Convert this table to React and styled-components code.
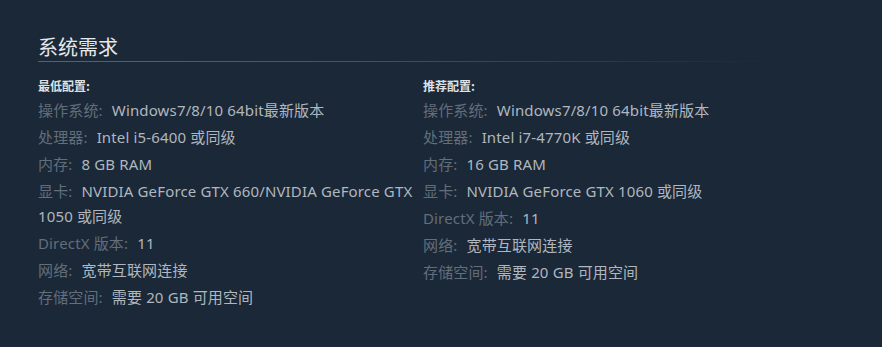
import React from 'react';
import styled, { createGlobalStyle } from 'styled-components';

const GlobalStyle = createGlobalStyle`
  html, body {
    margin: 0;
    padding: 0;
    background: #1b2838;
  }
  body {
    font-family: "Noto Sans", "Noto Sans CJK SC", sans-serif;
  }
`;

const Page = styled.div`
  width: 882px;
  height: 347px;
  background: #1b2838;
  padding: 34px 0 0 38px;
  box-sizing: border-box;
`;

const Title = styled.h2`
  margin: 0;
  width: 740px;
  font-family: "Noto Sans CJK SC", sans-serif;
  font-size: 20px;
  font-weight: 400;
  line-height: 26px;
  color: #e5e9ec;
  padding-bottom: 2px;

  &::after {
    content: '';
    display: block;
    height: 1px;
    margin-top: 1px;
    background: linear-gradient(to right, #3d6b87 0%, #365a72 40%, rgba(54, 90, 114, 0) 100%);
  }
`;

const Columns = styled.div`
  display: grid;
  grid-template-columns: 385px 385px;
  margin-top: 14px;
`;

const Column = styled.div`
  display: flex;
  flex-direction: column;
  padding-right: 8px;
`;

const Heading = styled.div`
  font-family: "Noto Sans CJK SC", sans-serif;
  font-size: 12px;
  font-weight: 700;
  line-height: 16px;
  color: #dfe3e6;
  margin-bottom: 4px;
`;

const List = styled.ul`
  list-style: none;
  margin: 0;
  padding: 0;
`;

const Item = styled.li`
  font-size: 15px;
  line-height: 25px;
  margin-bottom: 2px;
  color: #b0b7be;
  letter-spacing: 0.15px;
`;

const Label = styled.span`
  color: #626e7a;
  margin-right: 9px;
`;

const minimum = [
  ['操作系统:', 'Windows7/8/10 64bit最新版本'],
  ['处理器:', 'Intel i5-6400 或同级'],
  ['内存:', '8 GB RAM'],
  ['显卡:', 'NVIDIA GeForce GTX 660/NVIDIA GeForce GTX 1050 或同级'],
  ['DirectX 版本:', '11'],
  ['网络:', '宽带互联网连接'],
  ['存储空间:', '需要 20 GB 可用空间'],
];

const recommended = [
  ['操作系统:', 'Windows7/8/10 64bit最新版本'],
  ['处理器:', 'Intel i7-4770K 或同级'],
  ['内存:', '16 GB RAM'],
  ['显卡:', 'NVIDIA GeForce GTX 1060 或同级'],
  ['DirectX 版本:', '11'],
  ['网络:', '宽带互联网连接'],
  ['存储空间:', '需要 20 GB 可用空间'],
];

const ReqColumn = ({ title, rows }) => (
  <Column>
    <Heading>{title}</Heading>
    <List>
      {rows.map(([label, value]) => (
        <Item key={label}>
          <Label>{label}</Label>
          {value}
        </Item>
      ))}
    </List>
  </Column>
);

const App = () => (
  <>
    <GlobalStyle />
    <Page>
      <Title>系统需求</Title>
      <Columns>
        <ReqColumn title="最低配置:" rows={minimum} />
        <ReqColumn title="推荐配置:" rows={recommended} />
      </Columns>
    </Page>
  </>
);

export default App;
